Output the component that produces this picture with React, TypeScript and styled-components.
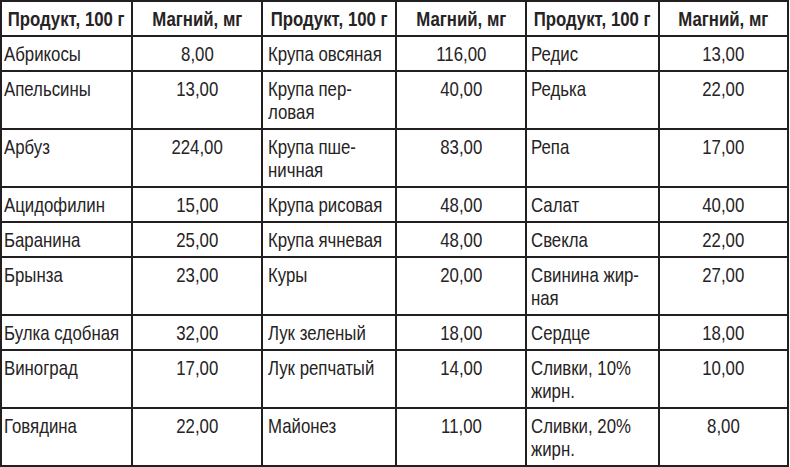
import React from 'react';
import styled, { createGlobalStyle } from 'styled-components';

interface Row {
  a: string[];
  b: string;
  c: string[];
  d: string;
  e: string[];
  f: string;
}

const rows: Row[] = [
  { a: ['Абрикосы'], b: '8,00', c: ['Крупа овсяная'], d: '116,00', e: ['Редис'], f: '13,00' },
  { a: ['Апельсины'], b: '13,00', c: ['Крупа пер-', 'ловая'], d: '40,00', e: ['Редька'], f: '22,00' },
  { a: ['Арбуз'], b: '224,00', c: ['Крупа пше-', 'ничная'], d: '83,00', e: ['Репа'], f: '17,00' },
  { a: ['Ацидофилин'], b: '15,00', c: ['Крупа рисовая'], d: '48,00', e: ['Салат'], f: '40,00' },
  { a: ['Баранина'], b: '25,00', c: ['Крупа ячневая'], d: '48,00', e: ['Свекла'], f: '22,00' },
  { a: ['Брынза'], b: '23,00', c: ['Куры'], d: '20,00', e: ['Свинина жир-', 'ная'], f: '27,00' },
  { a: ['Булка сдобная'], b: '32,00', c: ['Лук зеленый'], d: '18,00', e: ['Сердце'], f: '18,00' },
  { a: ['Виноград'], b: '17,00', c: ['Лук репчатый'], d: '14,00', e: ['Сливки, 10%', 'жирн.'], f: '10,00' },
  { a: ['Говядина'], b: '22,00', c: ['Майонез'], d: '11,00', e: ['Сливки, 20%', 'жирн.'], f: '8,00' },
];

const heads = ['Продукт, 100 г', 'Магний, мг', 'Продукт, 100 г', 'Магний, мг', 'Продукт, 100 г', 'Магний, мг'];

const GlobalStyle = createGlobalStyle`
  html, body {
    margin: 0;
    padding: 0;
    background: #fff;
  }
  body {
    font-family: "Liberation Sans", Arial, sans-serif;
  }
`;

const Table = styled.div`
  display: grid;
  grid-template-columns: 129px 128px 132px 128px 131px 127px;
  gap: 2px;
  padding: 2px;
  width: max-content;
  background: #231f20;
  color: #262324;
`;

// narrow face is not installed, so the regular one is squeezed to condensed width
const Cell = styled.div<{ $center?: boolean; $pad?: number; $head?: boolean }>`
  display: flex;
  flex-direction: column;
  align-items: ${(p) => (p.$center ? 'center' : 'flex-start')};
  background: #fff;
  padding: 5px 4px 5px ${(p) => (p.$center ? 4 : p.$pad ?? 5)}px;
  font-size: 21px;
  line-height: 23px;
  font-weight: ${(p) => (p.$head ? 700 : 400)};
  white-space: nowrap;
  min-width: 0;
`;

const Line = styled.span<{ $center?: boolean }>`
  display: block;
  transform: scaleX(0.8);
  transform-origin: ${(p) => (p.$center ? 'center' : 'left')} center;
`;

const Text: React.FC<{ lines: string[]; center?: boolean }> = ({ lines, center }) => (
  <>
    {lines.map((l, i) => (
      <Line key={i} $center={center}>
        {l}
      </Line>
    ))}
  </>
);

const App: React.FC = () => (
  <>
    <GlobalStyle />
    <Table>
      {heads.map((h, i) => (
        <Cell key={i} $head $center>
          <Text lines={[h]} center />
        </Cell>
      ))}
      {rows.map((r, i) => (
        <React.Fragment key={i}>
          <Cell $pad={2}>
            <Text lines={r.a} />
          </Cell>
          <Cell $center>
            <Text lines={[r.b]} center />
          </Cell>
          <Cell>
            <Text lines={r.c} />
          </Cell>
          <Cell $center>
            <Text lines={[r.d]} center />
          </Cell>
          <Cell $pad={4}>
            <Text lines={r.e} />
          </Cell>
          <Cell $center>
            <Text lines={[r.f]} center />
          </Cell>
        </React.Fragment>
      ))}
    </Table>
  </>
);

export default App;
